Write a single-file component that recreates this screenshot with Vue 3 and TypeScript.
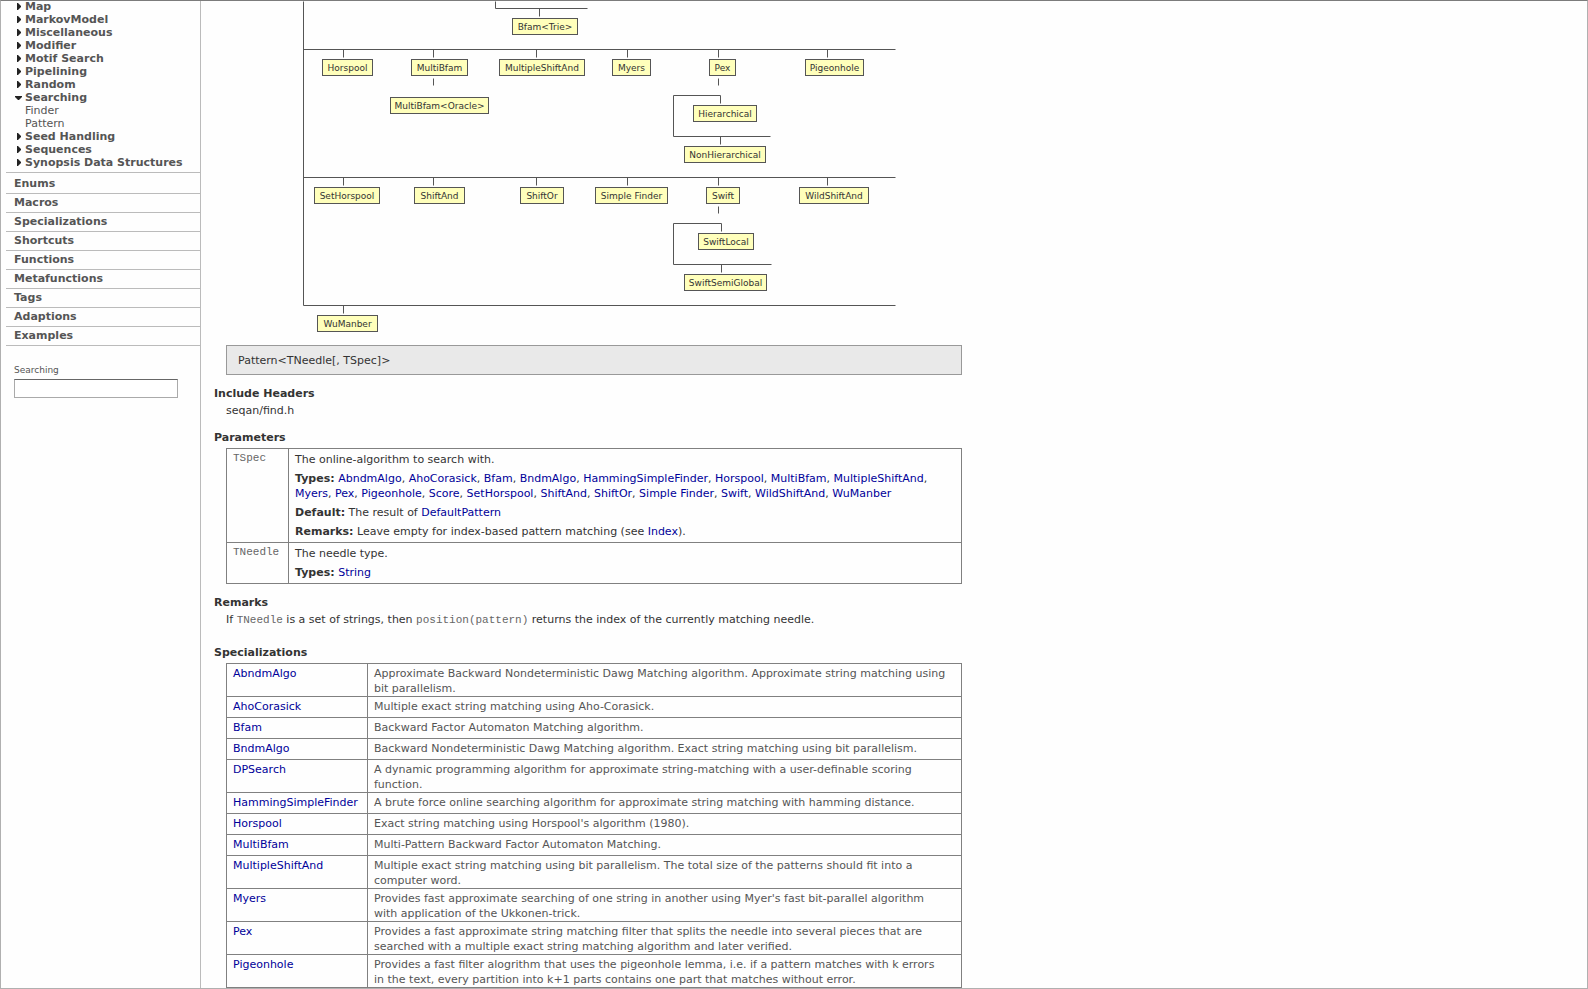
<script setup lang="ts">
interface Category { name: string; open?: boolean; children?: string[] }
interface TreeNode { label: string; x: number; y: number; w: number }
interface Spec { name: string; text: string }

const categories: Category[] = [
  { name: 'Map' },
  { name: 'MarkovModel' },
  { name: 'Miscellaneous' },
  { name: 'Modifier' },
  { name: 'Motif Search' },
  { name: 'Pipelining' },
  { name: 'Random' },
  { name: 'Searching', open: true, children: ['Finder', 'Pattern'] },
  { name: 'Seed Handling' },
  { name: 'Sequences' },
  { name: 'Synopsis Data Structures' },
]

const sections: string[] = [
  'Enums', 'Macros', 'Specializations', 'Shortcuts', 'Functions',
  'Metafunctions', 'Tags', 'Adaptions', 'Examples',
]

const nodes: TreeNode[] = [
  { label: 'Bfam<Trie>', x: 286, y: 17, w: 66 },
  { label: 'Horspool', x: 96, y: 58, w: 51 },
  { label: 'MultiBfam', x: 185, y: 58, w: 57 },
  { label: 'MultipleShiftAnd', x: 273, y: 58, w: 86 },
  { label: 'Myers', x: 386, y: 58, w: 39 },
  { label: 'Pex', x: 483, y: 58, w: 27 },
  { label: 'Pigeonhole', x: 579, y: 58, w: 59 },
  { label: 'MultiBfam<Oracle>', x: 164, y: 96, w: 99 },
  { label: 'Hierarchical', x: 467, y: 104, w: 64 },
  { label: 'NonHierarchical', x: 458, y: 145, w: 82 },
  { label: 'SetHorspool', x: 88, y: 186, w: 66 },
  { label: 'ShiftAnd', x: 188, y: 186, w: 51 },
  { label: 'ShiftOr', x: 294, y: 186, w: 44 },
  { label: 'Simple Finder', x: 369, y: 186, w: 73 },
  { label: 'Swift', x: 480, y: 186, w: 34 },
  { label: 'WildShiftAnd', x: 573, y: 186, w: 70 },
  { label: 'SwiftLocal', x: 472, y: 232, w: 56 },
  { label: 'SwiftSemiGlobal', x: 458, y: 273, w: 83 },
  { label: 'WuManber', x: 91, y: 314, w: 61 },
]

const edges: string[] = [
  'M269 0V7M269 7H361M313 7V15',
  'M77 0V304',
  'M77 48H669M117 48V56M207 48V56M310 48V56M401 48V56M492 48V56M601 48V56',
  'M77 176H669M117 176V184M207 176V184M310 176V184M401 176V184M492 176V184M601 176V184',
  'M77 304H669M117 304V312',
  'M207 77V84M492 77V84M492 205V212',
  'M494 102V94H447V135H544M494 135V143',
  'M495 230V222H447V263H545M495 263V271',
]

const patternTypes: string[] = [
  'AbndmAlgo', 'AhoCorasick', 'Bfam', 'BndmAlgo', 'HammingSimpleFinder', 'Horspool',
  'MultiBfam', 'MultipleShiftAnd', 'Myers', 'Pex', 'Pigeonhole', 'Score', 'SetHorspool',
  'ShiftAnd', 'ShiftOr', 'Simple Finder', 'Swift', 'WildShiftAnd', 'WuManber',
]

const specs: Spec[] = [
  { name: 'AbndmAlgo', text: 'Approximate Backward Nondeterministic Dawg Matching algorithm. Approximate string matching using\nbit parallelism.' },
  { name: 'AhoCorasick', text: 'Multiple exact string matching using Aho-Corasick.' },
  { name: 'Bfam', text: 'Backward Factor Automaton Matching algorithm.' },
  { name: 'BndmAlgo', text: 'Backward Nondeterministic Dawg Matching algorithm. Exact string matching using bit parallelism.' },
  { name: 'DPSearch', text: 'A dynamic programming algorithm for approximate string-matching with a user-definable scoring\nfunction.' },
  { name: 'HammingSimpleFinder', text: 'A brute force online searching algorithm for approximate string matching with hamming distance.' },
  { name: 'Horspool', text: "Exact string matching using Horspool's algorithm (1980)." },
  { name: 'MultiBfam', text: 'Multi-Pattern Backward Factor Automaton Matching.' },
  { name: 'MultipleShiftAnd', text: 'Multiple exact string matching using bit parallelism. The total size of the patterns should fit into a\ncomputer word.' },
  { name: 'Myers', text: "Provides fast approximate searching of one string in another using Myer's fast bit-parallel algorithm\nwith application of the Ukkonen-trick." },
  { name: 'Pex', text: 'Provides a fast approximate string matching filter that splits the needle into several pieces that are\nsearched with a multiple exact string matching algorithm and later verified.' },
  { name: 'Pigeonhole', text: 'Provides a fast filter alogrithm that uses the pigeonhole lemma, i.e. if a pattern matches with k errors\nin the text, every partition into k+1 parts contains one part that matches without error.' },
]
</script>

<template>
  <div class="frame">
    <nav class="sidebar">
      <ul class="categories">
        <li v-for="c in categories" :key="c.name">
          <a href="#" class="category">
            <svg class="arrow" viewBox="0 0 8 8" aria-hidden="true">
              <path v-if="c.open" d="M0 2H7V3L4 6H3L0 3Z" />
              <path v-else d="M2 0H3L6 3V4L3 7H2Z" />
            </svg>{{ c.name }}</a>
          <ul v-if="c.children" class="children">
            <li v-for="k in c.children" :key="k"><a href="#">{{ k }}</a></li>
          </ul>
        </li>
      </ul>
      <ul class="sections">
        <li v-for="s in sections" :key="s"><a href="#">{{ s }}</a></li>
      </ul>
      <form class="search" @submit.prevent>
        <label for="search">Searching</label>
        <input id="search" type="text" />
      </form>
    </nav>

    <main class="content">
      <div class="tree">
        <svg class="edges" aria-hidden="true">
          <path v-for="e in edges" :key="e" :d="e" transform="translate(.5 .5)" />
        </svg>
        <a
          v-for="n in nodes"
          :key="n.label"
          href="#"
          class="node"
          :style="{ left: n.x + 'px', top: n.y + 'px', width: n.w + 'px' }"
        >{{ n.label }}</a>
      </div>

      <div class="signature">Pattern&lt;TNeedle[, TSpec]&gt;</div>

      <h2>Include Headers</h2>
      <p class="text">seqan/find.h</p>

      <h2>Parameters</h2>
      <table class="params">
        <tbody>
          <tr>
            <th scope="row"><code>TSpec</code></th>
            <td>
              <p>The online-algorithm to search with.</p>
              <p>
                <b>Types:</b>&#32;<template v-for="(t, i) in patternTypes" :key="t"><a href="#">{{ t }}</a><template v-if="i < patternTypes.length - 1">, </template></template>
              </p>
              <p><b>Default:</b> The result of <a href="#">DefaultPattern</a></p>
              <p><b>Remarks:</b> Leave empty for index-based pattern matching (see <a href="#">Index</a>).</p>
            </td>
          </tr>
          <tr>
            <th scope="row"><code>TNeedle</code></th>
            <td>
              <p>The needle type.</p>
              <p><b>Types:</b> <a href="#">String</a></p>
            </td>
          </tr>
        </tbody>
      </table>

      <h2>Remarks</h2>
      <p class="text remark">If <code>TNeedle</code> is a set of strings, then <code>position(pattern)</code> returns the index of the currently matching needle.</p>

      <h2>Specializations</h2>
      <table class="specs">
        <tbody>
          <tr v-for="s in specs" :key="s.name">
            <th scope="row"><a href="#">{{ s.name }}</a></th>
            <td>{{ s.text }}</td>
          </tr>
        </tbody>
      </table>
    </main>
  </div>
</template>

<style>
body {
  margin: 0;
  background: #fefefe;
}
</style>

<style scoped>
.frame {
  box-sizing: border-box;
  display: flex;
  height: 100vh;
  overflow: hidden;
  border: 1px solid #b0b0b0;
  border-top-color: #7c7c7c;
  font: 11px/15px Verdana, "DejaVu Sans", sans-serif;
  color: #333;
}
a {
  color: #000099;
  text-decoration: none;
}
ul {
  list-style: none;
  margin: 0;
  padding: 0;
}
p {
  margin: 0;
}
.sidebar {
  box-sizing: border-box;
  flex: none;
  width: 200px;
  padding-left: 5px;
  border-right: 1px solid #bbb;
}
.sidebar a {
  display: block;
  color: #555;
}
.categories {
  padding: 0 0 3px 9px;
  line-height: 13px;
  margin-top: -1px;
}
.sidebar .category {
  display: flex;
  align-items: center;
  gap: 2px;
  font-weight: bold;
}
.arrow {
  width: 8px;
  height: 8px;
  fill: #222;
}
.children {
  padding-left: 10px;
}
.sections {
  font-weight: bold;
  border-top: 1px solid #bbb;
}
.sections li {
  padding: 1px 0 2px 8px;
  border-bottom: 1px solid #bbb;
}
.sections li:first-child {
  padding-top: 3px;
}
.search {
  padding: 17px 0 0 8px;
  font-size: 9px;
  color: #555;
}
.search label {
  display: block;
}
.search input {
  box-sizing: border-box;
  display: block;
  width: 164px;
  height: 19px;
  margin-top: 1px;
  padding: 0 4px;
  border: 1px solid #aaa;
  border-top-color: #666;
  background: #fff;
  font: inherit;
}
.content {
  box-sizing: border-box;
  flex: 0 1 761px;
  padding-left: 13px;
}
.tree {
  position: relative;
  height: 344px;
  margin-left: 12px;
}
.edges {
  display: block;
  width: 100%;
  height: 100%;
  fill: none;
  stroke: #555;
}
.node {
  position: absolute;
  box-sizing: border-box;
  height: 17px;
  padding-top: 1px;
  border: 1px solid #555;
  background: #ffffbb;
  color: #333;
  font-size: 9px;
  line-height: 14px;
  text-align: center;
  white-space: nowrap;
}
.signature {
  margin-left: 12px;
  padding: 7px 11px 6px;
  border: 1px solid #999;
  background: #e9e9e9;
}
h2 {
  margin: 11px 0 2px;
  font-size: 11px;
  line-height: 15px;
}
.text {
  margin: 0 0 12px 12px;
}
.remark {
  margin-bottom: 18px;
}
code {
  font: 11px/13px "Courier New", "Liberation Mono", monospace;
  color: #666;
}
table {
  width: calc(100% - 12px);
  margin-top: 3px;
  margin-left: 12px;
  border-collapse: collapse;
}
th,
td {
  border: 1px solid #808080;
  text-align: left;
  font-weight: normal;
  vertical-align: top;
}
.params th {
  width: 49px;
  padding: 1px 6px;
}
.params td {
  padding: 3px 6px;
}
.params p + p {
  margin-top: 4px;
}
.specs th {
  width: 128px;
  padding: 2px 6px 3px;
}
.specs td {
  padding: 2px 0 0 6px;
  color: #555;
  white-space: pre-line;
}
</style>
